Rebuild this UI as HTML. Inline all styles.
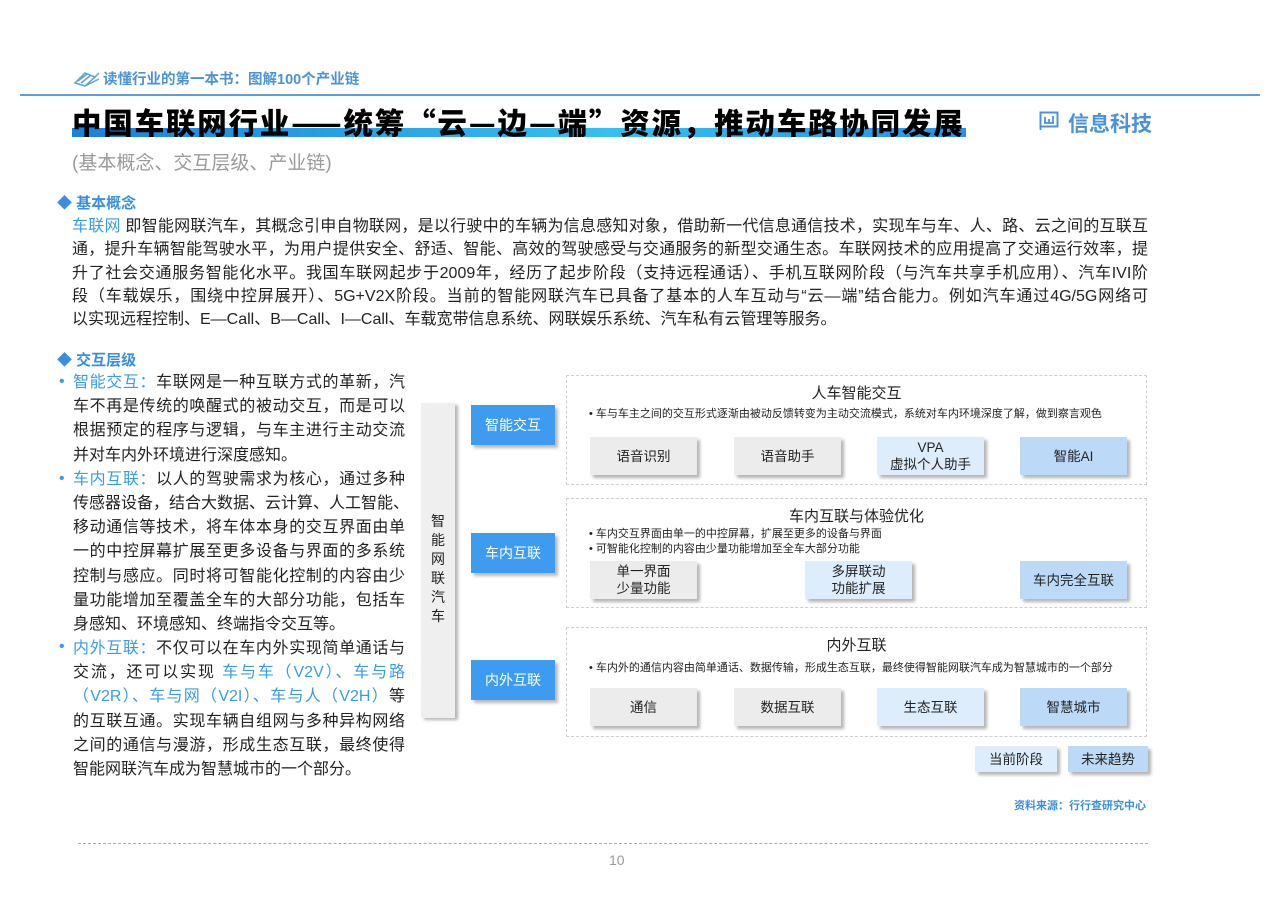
<!DOCTYPE html>
<html><head><meta charset="utf-8"><style>
*{margin:0;padding:0;box-sizing:border-box}
body{width:1280px;height:905px;background:#fff;position:relative;overflow:hidden;font-family:"Liberation Sans","Noto Sans CJK SC",sans-serif;color:#222}
.a{position:absolute}
.hl{color:#3a9be8}
.p{position:absolute;left:72px;width:1076px;font-size:16px;line-height:23.3px;color:#222}
.p div{text-align:justify;text-align-last:justify;white-space:nowrap;height:23.3px}
.p div.l{text-align-last:left}
.lst{position:absolute;left:73px;top:371px;width:332px;font-size:16px;line-height:24.2px}
.lst div{height:24.2px;white-space:nowrap;text-align:justify;text-align-last:justify}
.lst div.l{text-align-last:left}
.dot{position:absolute;left:59px;color:#3a9be8;font-size:16px}
.bb{position:absolute;width:84px;height:40px;background:#3d9bf0;color:#fff;font-size:14px;display:flex;align-items:center;justify-content:center;box-shadow:3px 3px 3px #b9b9b9}
.pan{position:absolute;left:566px;width:581px;border:1px dashed #cfcfcf}
.pt{position:absolute;width:100%;text-align:center;top:6px;font-size:15px;color:#222}
.pd{position:absolute;left:22px;font-size:11px;color:#222;line-height:15px}
.bx{position:absolute;width:107px;height:38px;display:flex;align-items:center;justify-content:center;text-align:center;font-size:13.5px;line-height:17px;box-shadow:3px 3px 3px #b5b5b5}
.g{background:#ececec}.lb{background:#deedfc}.mb{background:#bcdaf7}
</style></head><body>
<svg class="a" style="left:73px;top:69px" width="28" height="18" viewBox="0 0 28 18"><path d="M2 14 L12 4 L22 8 L12 17 Z M5 12 L14 5 M8 14 L17 7 M22 8 L26 4 M12 17 L26 10" fill="none" stroke="#5aa2dc" stroke-width="1.5"/></svg>
<div class="a" style="left:103px;top:68px;font-size:14.5px;color:#4a93d6;font-weight:bold">读懂行业的第一本书：图解100个产业链</div>
<div class="a" style="left:20px;top:94px;width:1240px;height:2px;background:#5b9fdc"></div>
<div class="a" style="left:72px;top:128px;width:894px;height:9px;background:linear-gradient(90deg,#1a7fe0,#35c0f0 60%,#2a90e8)"></div>
<div class="a" style="left:72px;top:100px;width:960px;font-family:'Noto Sans CJK SC',sans-serif;font-size:29.5px;font-weight:900;color:#000;white-space:nowrap;line-height:44px;letter-spacing:1.8px">中国车联网行业——统筹“云—边—端”资源，推动车路协同发展</div>
<svg class="a" style="left:1039px;top:111px" width="20" height="20" viewBox="0 0 20 20"><rect x="1.5" y="1.5" width="17" height="14" fill="none" stroke="#4a93d6" stroke-width="2"/><path d="M1.5 15.5 V19 M6 6 V12 M10 8 V12 M14 5 V12 M5 12 H15" stroke="#4a93d6" stroke-width="1.8" fill="none"/></svg>
<div class="a" style="left:1068px;top:108px;font-size:21px;color:#4a93d6;font-weight:bold">信息科技</div>
<div class="a" style="left:72px;top:148px;font-size:19px;color:#9a9a9a">(基本概念、交互层级、产业链)</div>
<div class="a" style="left:57px;top:192px;font-size:15px;font-weight:bold;color:#3a8fdc">◆ 基本概念</div>
<div class="p" style="top:215px">
<div><span class="hl">车联网</span> 即智能网联汽车，其概念引申自物联网，是以行驶中的车辆为信息感知对象，借助新一代信息通信技术，实现车与车、人、路、云之间的互联互</div>
<div>通，提升车辆智能驾驶水平，为用户提供安全、舒适、智能、高效的驾驶感受与交通服务的新型交通生态。车联网技术的应用提高了交通运行效率，提</div>
<div>升了社会交通服务智能化水平。我国车联网起步于2009年，经历了起步阶段（支持远程通话）、手机互联网阶段（与汽车共享手机应用）、汽车IVI阶</div>
<div>段（车载娱乐，围绕中控屏展开）、5G+V2X阶段。当前的智能网联汽车已具备了基本的人车互动与“云—端”结合能力。例如汽车通过4G/5G网络可</div>
<div class="l">以实现远程控制、E—Call、B—Call、I—Call、车载宽带信息系统、网联娱乐系统、汽车私有云管理等服务。</div>
</div>
<div class="a" style="left:57px;top:349px;font-size:15px;font-weight:bold;color:#3a8fdc">◆ 交互层级</div>
<div class="dot" style="top:373px">•</div><div class="dot" style="top:470px">•</div><div class="dot" style="top:638px">•</div>
<div class="lst">
<div><span class="hl">智能交互：</span>车联网是一种互联方式的革新，汽</div>
<div>车不再是传统的唤醒式的被动交互，而是可以</div>
<div>根据预定的程序与逻辑，与车主进行主动交流</div>
<div class="l">并对车内外环境进行深度感知。</div>
<div><span class="hl">车内互联：</span>以人的驾驶需求为核心，通过多种</div>
<div>传感器设备，结合大数据、云计算、人工智能、</div>
<div>移动通信等技术，将车体本身的交互界面由单</div>
<div>一的中控屏幕扩展至更多设备与界面的多系统</div>
<div>控制与感应。同时将可智能化控制的内容由少</div>
<div>量功能增加至覆盖全车的大部分功能，包括车</div>
<div class="l">身感知、环境感知、终端指令交互等。</div>
<div><span class="hl">内外互联：</span>不仅可以在车内外实现简单通话与</div>
<div>交流，还可以实现 <span class="hl">车与车（V2V）、车与路</span></div>
<div><span class="hl">（V2R）、车与网（V2I）、车与人（V2H）</span>等</div>
<div>的互联互通。实现车辆自组网与多种异构网络</div>
<div>之间的通信与漫游，形成生态互联，最终使得</div>
<div class="l">智能网联汽车成为智慧城市的一个部分。</div>
</div>
<div class="a" style="left:421px;top:403px;width:34px;height:315px;background:#efefef;box-shadow:3px 2px 3px #b5b5b5;font-size:14px;line-height:19px;text-align:center;padding-top:109px;color:#222">智<br>能<br>网<br>联<br>汽<br>车</div>
<div class="bb" style="left:471px;top:405px">智能交互</div>
<div class="bb" style="left:471px;top:533px">车内互联</div>
<div class="bb" style="left:471px;top:660px">内外互联</div>
<div class="pan" style="top:375px;height:110px">
<div class="pt">人车智能交互</div>
<div class="pd" style="top:31px">• 车与车主之间的交互形式逐渐由被动反馈转变为主动交流模式，系统对车内环境深度了解，做到察言观色</div>
</div>
<div class="bx g" style="left:590px;top:437px">语音识别</div>
<div class="bx g" style="left:734px;top:437px">语音助手</div>
<div class="bx lb" style="left:877px;top:437px">VPA<br>虚拟个人助手</div>
<div class="bx mb" style="left:1020px;top:437px">智能AI</div>
<div class="pan" style="top:498px;height:110px">
<div class="pt">车内互联与体验优化</div>
<div class="pd" style="top:28px">• 车内交互界面由单一的中控屏幕，扩展至更多的设备与界面<br>• 可智能化控制的内容由少量功能增加至全车大部分功能</div>
</div>
<div class="bx g" style="left:590px;top:561px">单一界面<br>少量功能</div>
<div class="bx lb" style="left:805px;top:561px">多屏联动<br>功能扩展</div>
<div class="bx mb" style="left:1020px;top:561px">车内完全互联</div>
<div class="pan" style="top:627px;height:110px">
<div class="pt">内外互联</div>
<div class="pd" style="top:33px">• 车内外的通信内容由简单通话、数据传输，形成生态互联，最终使得智能网联汽车成为智慧城市的一个部分</div>
</div>
<div class="bx g" style="left:590px;top:688px">通信</div>
<div class="bx g" style="left:734px;top:688px">数据互联</div>
<div class="bx lb" style="left:877px;top:688px">生态互联</div>
<div class="bx mb" style="left:1020px;top:688px">智慧城市</div>
<div class="bx lb" style="left:975px;top:746px;width:82px;height:26px">当前阶段</div>
<div class="bx mb" style="left:1068px;top:746px;width:80px;height:26px">未来趋势</div>
<div class="a" style="left:1010px;top:797px;width:136px;text-align:right;font-size:11px;font-weight:bold;color:#3a8fdc">资料来源：行行查研究中心</div>
<div class="a" style="left:78px;top:843px;width:1070px;border-top:1px dashed #aaa"></div>
<div class="a" style="left:609px;top:852px;font-size:14px;color:#999">10</div>
</body></html>
